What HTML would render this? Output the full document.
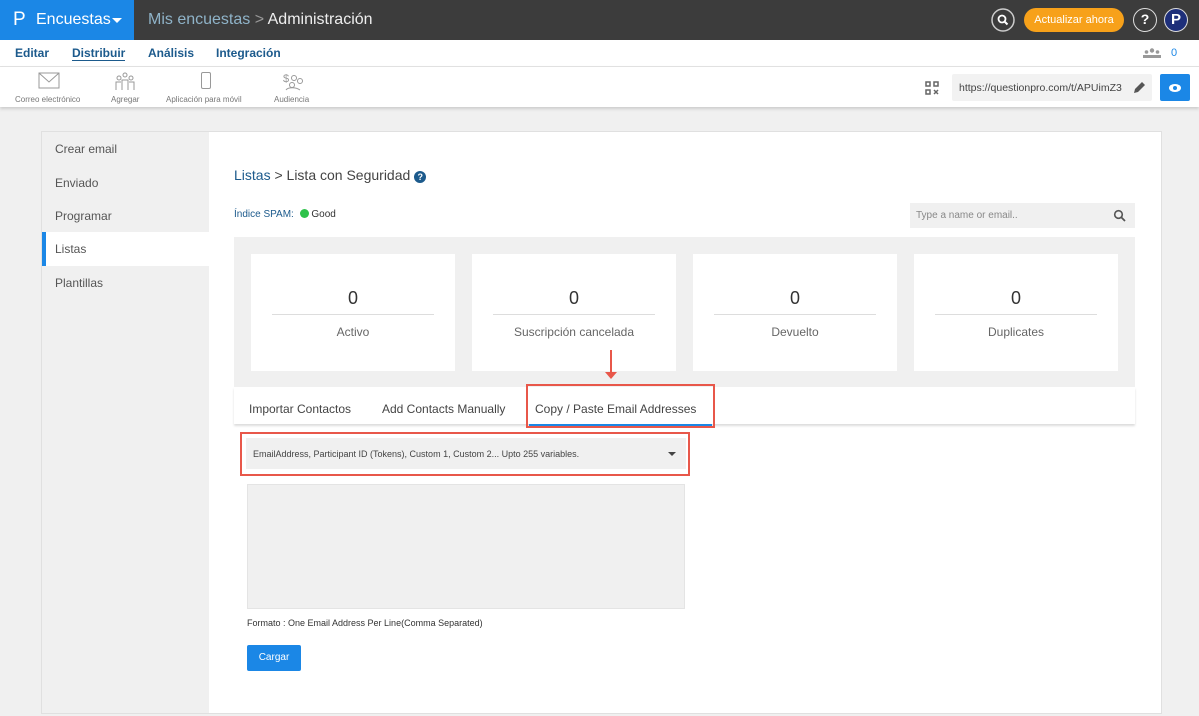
<!DOCTYPE html>
<html><head><meta charset="utf-8"><style>
*{box-sizing:border-box;margin:0;padding:0}
body{width:1199px;height:716px;overflow:hidden;background:#f0f0f0;font-family:"Liberation Sans",sans-serif;position:relative;color:#333}
.a{position:absolute}
</style></head><body>
<div class="a" style="left:0;top:0;width:1199px;height:40px;background:#3c3c3c"></div>
<div class="a" style="left:0;top:0;width:134px;height:40px;background:#1b87e6"></div>
<div class="a" style="left:13px;top:9px;color:#fff;font-size:19px">P</div>
<div class="a" style="left:36px;top:11px;color:#fff;font-size:16px">Encuestas</div>
<div class="a" style="left:112px;top:18px;border:5px solid transparent;border-top:5px solid #fff"></div>
<div class="a" style="left:148px;top:11px;font-size:16px;color:#8fb3c8">Mis encuestas <span style="color:#999">&gt;</span> <span style="color:#eee">Administración</span></div>
<svg class="a" style="left:991px;top:8px" width="24" height="24"><circle cx="12" cy="12" r="11" fill="none" stroke="#ccc" stroke-width="1.5"/><circle cx="11" cy="11" r="3.5" fill="none" stroke="#fff" stroke-width="1.8"/><path d="M13.5 13.5L16.5 16.5" stroke="#fff" stroke-width="2"/></svg>
<div class="a" style="left:1024px;top:8px;width:100px;height:24px;background:#f7a11a;border-radius:12px;color:#fff;font-size:11px;text-align:center;line-height:24px">Actualizar ahora</div>
<div class="a" style="left:1133px;top:8px;width:24px;height:24px;border:1.5px solid #ddd;border-radius:50%;color:#fff;font-size:14px;font-weight:bold;text-align:center;line-height:21px">?</div>
<div class="a" style="left:1164px;top:8px;width:24px;height:24px;border:1.5px solid #ddd;border-radius:50%;background:#1e2f7a;color:#fff;font-size:15px;font-weight:bold;text-align:center;line-height:21px">P</div>
<div class="a" style="left:0;top:40px;width:1199px;height:27px;background:#fff;border-bottom:1px solid #e2e2e2"></div>
<div class="a" style="left:15px;top:46px;font-size:12px;color:#1c5a8c;font-weight:bold">Editar</div>
<div class="a" style="left:72px;top:46px;font-size:12px;color:#1c5a8c;font-weight:bold;border-bottom:1.5px solid #1c5a8c">Distribuir</div>
<div class="a" style="left:148px;top:46px;font-size:12px;color:#1c5a8c;font-weight:bold">Análisis</div>
<div class="a" style="left:216px;top:46px;font-size:12px;color:#1c5a8c;font-weight:bold">Integración</div>
<svg class="a" style="left:1143px;top:48px" width="18" height="10"><circle cx="9" cy="2.5" r="2.2" fill="#999"/><circle cx="3.5" cy="4" r="1.8" fill="#999"/><circle cx="14.5" cy="4" r="1.8" fill="#999"/><rect x="0" y="7" width="18" height="3" fill="#999"/></svg>
<div class="a" style="left:1171px;top:47px;font-size:11px;color:#1b87e6">0</div>
<div class="a" style="left:0;top:67px;width:1199px;height:40px;background:#fff;box-shadow:0 2px 3px #ccc"></div>
<svg class="a" style="left:38px;top:72px" width="22" height="18"><rect x="1" y="1" width="20" height="15" fill="none" stroke="#999"/><path d="M1 1 L11 10 L21 1" fill="none" stroke="#999"/></svg>
<div class="a" style="left:15px;top:95px;font-size:8px;color:#777">Correo electrónico</div>
<svg class="a" style="left:115px;top:72px" width="20" height="19" fill="none" stroke="#999"><circle cx="10" cy="3" r="2"/><circle cx="4" cy="6" r="2"/><circle cx="16" cy="6" r="2"/><path d="M7 18V8h6v10M1 18v-8h5M19 18v-8h-5"/></svg>
<div class="a" style="left:111px;top:95px;font-size:8px;color:#777">Agregar</div>
<div class="a" style="left:201px;top:72px;width:10px;height:17px;border:1px solid #999;border-radius:2px"></div>
<div class="a" style="left:166px;top:95px;font-size:8px;color:#777">Aplicación para móvil</div>
<svg class="a" style="left:283px;top:72px" width="22" height="19" fill="none" stroke="#999"><text x="0" y="10" font-size="11" fill="#999" stroke="none" font-family="Liberation Sans">$</text><circle cx="11" cy="6" r="2.5"/><circle cx="17" cy="9" r="2.5"/><circle cx="9" cy="13" r="2.5"/><path d="M3 18c2-3 10-3 14 0"/></svg>
<div class="a" style="left:274px;top:95px;font-size:8px;color:#777">Audiencia</div>
<svg class="a" style="left:925px;top:81px" width="14" height="14" fill="none" stroke="#666" stroke-width="1.5"><rect x="1" y="1" width="4" height="4"/><rect x="9" y="1" width="4" height="4"/><rect x="1" y="9" width="4" height="4"/><path d="M9 9l4 4M13 9l-4 4"/></svg>
<div class="a" style="left:952px;top:74px;width:200px;height:27px;background:#f2f2f2;border-radius:2px;font-size:10.5px;color:#444;padding:8px 7px;white-space:nowrap">https://questionpro.com/t/APUimZ3</div>
<svg class="a" style="left:1132px;top:81px" width="14" height="14"><path d="M2 12l1-4 7-7 3 3-7 7z" fill="#555"/></svg>
<div class="a" style="left:1160px;top:74px;width:30px;height:27px;background:#1b87e6;border-radius:2px"></div>
<svg class="a" style="left:1168px;top:83px" width="14" height="10"><ellipse cx="7" cy="5" rx="6" ry="4" fill="#fff"/><circle cx="7" cy="5" r="2" fill="#1b87e6"/></svg>

<div class="a" style="left:41px;top:131px;width:1121px;height:583px;background:#fff;border:1px solid #e0e0e0"></div>
<div class="a" style="left:42px;top:132px;width:167px;height:581px;background:#f0f0f0"></div>
<div class="a" style="left:55px;top:142px;font-size:12px;color:#555">Crear email</div>
<div class="a" style="left:55px;top:176px;font-size:12px;color:#555">Enviado</div>
<div class="a" style="left:55px;top:209px;font-size:12px;color:#555">Programar</div>
<div class="a" style="left:42px;top:232px;width:167px;height:34px;background:#fff;border-left:4px solid #1b87e6"></div>
<div class="a" style="left:55px;top:242px;font-size:12px;color:#555">Listas</div>
<div class="a" style="left:55px;top:276px;font-size:12px;color:#555">Plantillas</div>

<div class="a" style="left:234px;top:167px;font-size:14px;color:#1c5a8c">Listas <span style="color:#444">&gt; Lista con Seguridad</span> <span style="display:inline-block;width:12px;height:12px;border-radius:50%;background:#1c5a8c;color:#fff;font-size:9px;text-align:center;line-height:12px;font-weight:bold">?</span></div>
<div class="a" style="left:234px;top:209px;font-size:10px;color:#1c5a8c">Índice SPAM: <span style="display:inline-block;width:9px;height:9px;border-radius:50%;background:#2ec24a;vertical-align:-1px;margin-left:3px"></span> <span style="color:#333">Good</span></div>
<div class="a" style="left:910px;top:203px;width:225px;height:25px;background:#f0f0f0;font-size:10px;color:#888;padding:7px 6px">Type a name or email..</div>
<svg class="a" style="left:1113px;top:209px" width="13" height="13"><circle cx="5.5" cy="5.5" r="3.8" fill="none" stroke="#555" stroke-width="1.6"/><path d="M8.5 8.5L12 12" stroke="#555" stroke-width="1.8"/></svg>
<div class="a" style="left:234px;top:237px;width:901px;height:150px;background:#f0f0f0"></div>
<div class="a" style="left:251px;top:254px;width:204px;height:117px;background:#fff"></div>
<div class="a" style="left:472px;top:254px;width:204px;height:117px;background:#fff"></div>
<div class="a" style="left:693px;top:254px;width:204px;height:117px;background:#fff"></div>
<div class="a" style="left:914px;top:254px;width:204px;height:117px;background:#fff"></div>
<div class="a" style="left:272px;top:288px;width:162px;text-align:center;font-size:18px;color:#333;border-bottom:1px solid #ddd;padding-bottom:5px">0</div>
<div class="a" style="left:272px;top:325px;width:162px;text-align:center;font-size:12px;color:#666">Activo</div>
<div class="a" style="left:493px;top:288px;width:162px;text-align:center;font-size:18px;color:#333;border-bottom:1px solid #ddd;padding-bottom:5px">0</div>
<div class="a" style="left:473px;top:325px;width:202px;text-align:center;font-size:12px;color:#666">Suscripción cancelada</div>
<div class="a" style="left:714px;top:288px;width:162px;text-align:center;font-size:18px;color:#333;border-bottom:1px solid #ddd;padding-bottom:5px">0</div>
<div class="a" style="left:714px;top:325px;width:162px;text-align:center;font-size:12px;color:#666">Devuelto</div>
<div class="a" style="left:935px;top:288px;width:162px;text-align:center;font-size:18px;color:#333;border-bottom:1px solid #ddd;padding-bottom:5px">0</div>
<div class="a" style="left:935px;top:325px;width:162px;text-align:center;font-size:12px;color:#666">Duplicates</div>
<div class="a" style="left:610px;top:350px;width:2px;height:24px;background:#e8574a"></div>
<div class="a" style="left:605px;top:372px;border:6px solid transparent;border-top:7px solid #e8574a"></div>
<div class="a" style="left:234px;top:387px;width:901px;height:37px;background:#fff;box-shadow:0 2px 2px #ddd"></div>
<div class="a" style="left:249px;top:402px;font-size:12px;color:#444">Importar Contactos</div>
<div class="a" style="left:382px;top:402px;font-size:12px;color:#444">Add Contacts Manually</div>
<div class="a" style="left:526px;top:384px;width:189px;height:44px;border:2px solid #e8574a"></div>
<div class="a" style="left:529px;top:424px;width:183px;height:2px;background:#1b87e6"></div>
<div class="a" style="left:535px;top:402px;font-size:12px;color:#444">Copy / Paste Email Addresses</div>
<div class="a" style="left:240px;top:432px;width:450px;height:44px;border:2px solid #e8574a"></div>
<div class="a" style="left:246px;top:438px;width:440px;height:31px;background:#f0f0f0;font-size:9px;color:#444;padding:11px 7px">EmailAddress, Participant ID (Tokens), Custom 1, Custom 2... Upto 255 variables.</div>
<div class="a" style="left:668px;top:452px;border:4px solid transparent;border-top:4px solid #444"></div>
<div class="a" style="left:247px;top:484px;width:438px;height:125px;background:#f0f0f0;border:1px solid #e4e4e4"></div>
<div class="a" style="left:247px;top:618px;font-size:9px;color:#333">Formato : One Email Address Per Line(Comma Separated)</div>
<div class="a" style="left:247px;top:645px;width:54px;height:26px;background:#1b87e6;border-radius:2px;color:#fff;font-size:10px;text-align:center;line-height:26px">Cargar</div>
</body></html>
